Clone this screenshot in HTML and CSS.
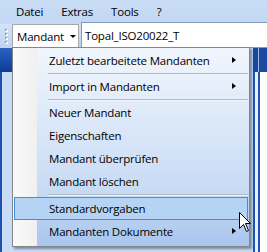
FILE: index.html
```html
<!DOCTYPE html>
<html>
<head>
<meta charset="utf-8">
<link rel="stylesheet" href="styles.css">
</head>
<body>
<div class="app">
  <div class="menubar">
    <span class="mb-item">Datei</span>
    <span class="mb-item">Extras</span>
    <span class="mb-item">Tools</span>
    <span class="mb-item">?</span>
  </div>
  <div class="toolbar">
    <div class="grip"></div>
    <div class="dropbtn"><span>Mandant</span><span class="caret"></span></div>
    <div class="field">Topal_ISO20022_T</div>
  </div>
  <div class="workspace">
    <div class="side left">
      <div class="side-head"></div>
      <div class="side-body"></div>
    </div>
    <div class="center"></div>
    <div class="side right">
      <div class="side-head"></div>
      <div class="side-body"><div class="inner"></div></div>
    </div>

    <div class="menu">
      <div class="item sub">Zuletzt bearbeitete Mandanten</div>
      <div class="sep"></div>
      <div class="item sub">Import in Mandanten</div>
      <div class="sep"></div>
      <div class="item">Neuer Mandant</div>
      <div class="item">Eigenschaften</div>
      <div class="item">Mandant überprüfen</div>
      <div class="item">Mandant löschen</div>
      <div class="sep"></div>
      <div class="item hot">Standardvorgaben</div>
      <div class="item sub">Mandanten Dokumente</div>
    </div>

    <svg class="cursor" width="13" height="21" viewBox="0 0 13 21">
      <path d="M0.5 0.5 L0.5 16.5 L4.5 12.5 L7.5 19.5 L9.5 18.5 L6.5 11.5 L11.5 11.5 Z" fill="#fff" stroke="#000" stroke-width="1"/>
    </svg>
  </div>
</div>
</body>
</html>
```

FILE: styles.css
```css
html, body {
  margin: 0;
  padding: 0;
}
body {
  width: 267px;
  height: 252px;
  overflow: hidden;
  background: #c4daf6;
  font-family: "Open Sans", "Noto Sans", sans-serif;
  font-size: 11.5px;
  letter-spacing: -0.2px;
  color: #000;
}
.app {
  display: flex;
  flex-direction: column;
  height: 252px;
}
.menubar {
  height: 24px;
  display: flex;
  align-items: center;
  padding-left: 16px;
  background: linear-gradient(#c9dcf5, #c1d7f3);
}
.mb-item {
  margin-right: 18px;
  line-height: 24px;
}
.toolbar {
  height: 24px;
  display: flex;
  align-items: stretch;
  background: linear-gradient(#d3e3f8, #bcd3f1);
}
.grip {
  width: 4px;
  margin: 4px;
  background-image: radial-gradient(circle, #fff 0.8px, transparent 1px), radial-gradient(circle, #7d9cc9 0.8px, transparent 1px);
  background-size: 4px 4px, 4px 4px;
  background-position: 1px 1px, 0 0;
}
.dropbtn {
  width: 67px;
  display: flex;
  align-items: center;
  gap: 6px;
  padding-left: 4px;
  background: #fff;
  border: 1px solid #a7a7a7;
  border-bottom: none;
  box-sizing: border-box;
}
.caret {
  width: 0;
  height: 0;
  border-left: 3px solid transparent;
  border-right: 3px solid transparent;
  border-top: 3px solid #000;
}
.field {
  flex: 1;
  margin-left: 2px;
  margin-top: -2px;
  padding-left: 3px;
  background: #fff;
  border: 1px solid #7f9db9;
  border-right: none;
  display: flex;
  align-items: center;
}
.workspace {
  flex: 1;
  position: relative;
  display: flex;
}
.side {
  display: flex;
  flex-direction: column;
}
.side.left {
  width: 12px;
}
.side.right {
  width: 17px;
}
.center {
  flex: 1;
}
.side-head {
  height: 24px;
  background: linear-gradient(#2a63c4, #0b3c94);
}
.side-body {
  flex: 1;
  background: #c8dcf7;
}
.left .side-body {
  border-left: 2px solid #1c4fae;
}
.right .side-head {
  border-left: 3px solid #c4daf6;
  background: linear-gradient(90deg, #17479f 0 5px, #9fb9e2 5px 6px, #1a4aa3 6px);
}
.right .side-body {
  padding-left: 3px;
  display: flex;
}
.right .inner {
  flex: 1;
  border-left: 2px solid #1f52b3;
  box-shadow: inset 3px 0 0 #e8f0fb, inset 5px 0 0 #1f52b3;
  background: #ffffff;
}
.menu {
  position: absolute;
  left: 12px;
  top: -1px;
  width: 236px;
  padding: 1px 0 3px 0;
  border: 1px solid #868686;
  background:
    linear-gradient(90deg, #fafafa 0, #f0f0f0 24px, transparent 24px),
    linear-gradient(#f1f6fd, #c9dcf5 70%, #a9c6ee);
  box-shadow: 2px 2px 2px rgba(0,0,0,0.35);
}
.item {
  height: 23px;
  line-height: 23px;
  padding-left: 35px;
  position: relative;
  margin: 0 1px;
}
.item.sub::after {
  content: "";
  position: absolute;
  right: 12px;
  top: 8px;
  border-top: 3.5px solid transparent;
  border-bottom: 3.5px solid transparent;
  border-left: 4px solid #000;
}
.item.hot {
  background: #b5d4f3;
  border: 1px solid #3d8fdf;
  height: 21px;
  line-height: 21px;
  padding-left: 34px;
  margin-top: 1px;
}
.sep {
  height: 1px;
  margin: 1px 1px 0 35px;
  background: #b0b9c6;
  border-bottom: 1px solid #eef3fb;
}
.cursor {
  position: absolute;
  left: 239px;
  top: 164px;
}
```
